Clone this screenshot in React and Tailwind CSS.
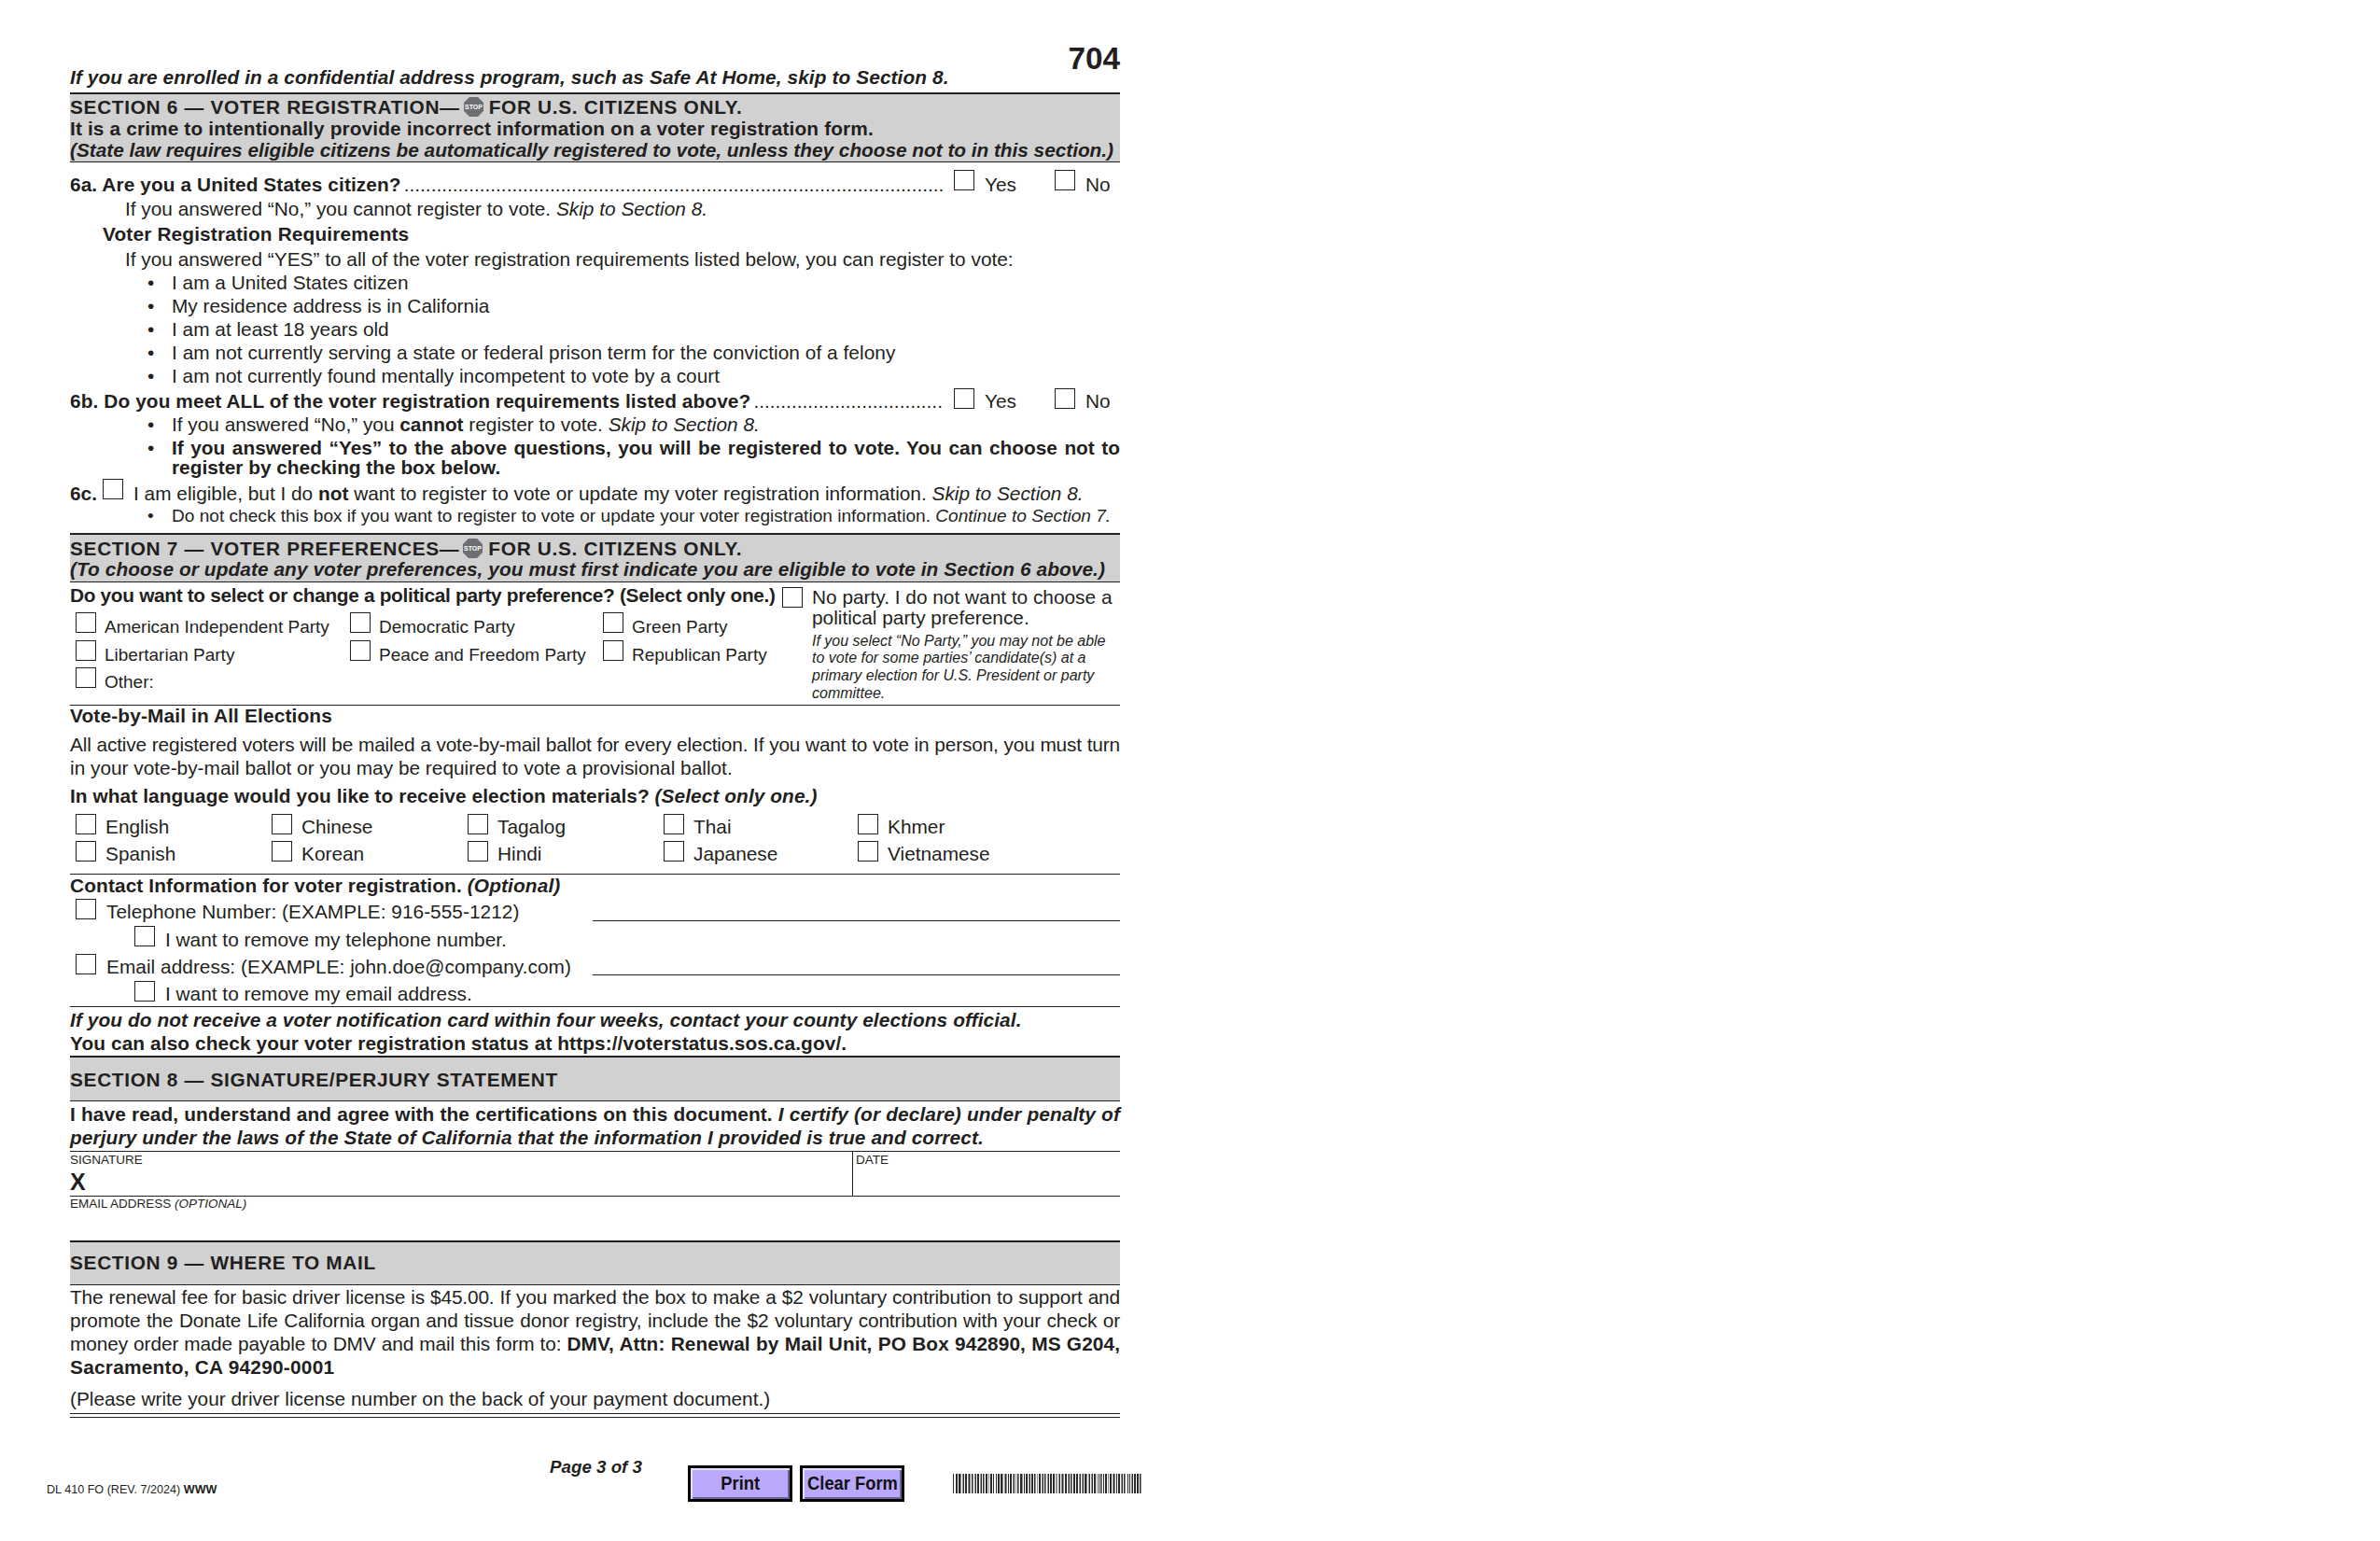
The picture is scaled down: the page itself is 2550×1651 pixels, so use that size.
import React from "react";

const Box = ({ className = "" }) => (
  <span className={"block w-[22px] h-[22px] shrink-0 border-[1.5px] border-[#231f20] " + className} />
);

const Stop = () => (
  <svg width="21" height="21" viewBox="0 0 21 21" className="inline-block -mt-[3px] ml-[4px] mr-[6px]">
    <polygon points="6,0 15,0 21,6 21,15 15,21 6,21 0,15 0,6" fill="#6d6e71" />
    <text x="10.5" y="13.2" textAnchor="middle" fontSize="7" fontWeight="700" letterSpacing="0" fill="#fff" fontFamily="Liberation Sans, sans-serif">STOP</text>
  </svg>
);

const Bullet = ({ className = "", children }) => (
  <div className={"flex pl-[83px] h-[25px] leading-[25px] " + className}>
    <span className="w-[26px] shrink-0">•</span>
    <span className="whitespace-nowrap">{children}</span>
  </div>
);

const YesNo = ({ off }) => (
  <div className="flex w-[182px] shrink-0 ml-auto">
    <Box className={"ml-[4px] " + off} />
    <span className="ml-[11px] w-[75px]">Yes</span>
    <Box className={off} />
    <span className="ml-[11px]">No</span>
  </div>
);

const Party = ({ label }) => (
  <div className="flex gap-[9px]">
    <Box />
    <span className="pt-[3px] whitespace-nowrap text-[19px] leading-[25px] h-[25px]">{label}</span>
  </div>
);

const Lang = ({ label }) => (
  <div className="flex gap-[10px]">
    <Box />
    <span className="pt-[1px] whitespace-nowrap leading-[25px]">{label}</span>
  </div>
);

const BAR =
  "#..##.##+.+#.##.+#+.#+.+#.##.+#.#+.##.+.##.#..#.##.##+.+#+.#.##.+#.+.#+.##+.#.##.+#.##.#+.+.##.+#.#+.+#.##.##.++.+#.+#+.##.+#.#+.##.##.+#.+#.##+.+#.+#.##.+.#.#+.#.##.+.##.+#+.#.##.+#.#+..#.#.+#.##.##.#+";

const Barcode = () => (
  <svg width="204" height="21" viewBox="0 0 204 21" className="block">
    {BAR.split("").map((c, i) =>
      c === "." ? null : <rect key={i} x={i} y="0" width="1" height="21" fill={c === "#" ? "#2a2a2a" : "#8f8f8f"} />
    )}
  </svg>
);

const Button = ({ children }) => (
  <div className="w-[112px] h-[39px] shrink-0 border-[3px] border-black bg-[#b9a8fb] flex items-center justify-center font-bold text-[19.5px] text-[#111] shadow-[inset_2px_2px_0_#e6dfff,inset_-2px_-2px_0_#6f6496]">
    <span className="inline-block scale-x-[0.94]">{children}</span>
  </div>
);

export default function App() {
  return (
    <div className="w-[2550px] h-[1651px] overflow-hidden bg-white pl-[75px] pt-[46px] text-[#231f20] text-[20.83px] font-['Liberation_Sans',Arial,sans-serif]">
      <div className="w-[1125px]">
        <div className="flex justify-between h-[52.5px]">
          <div className="self-end mb-[4px] font-bold italic leading-[25px] tracking-[0.1px]">If you are enrolled in a confidential address program, such as Safe At Home, skip to Section 8.</div>
          <div className="font-bold text-[33.33px] leading-[33px]">704</div>
        </div>

        <div className="bg-[#d1d1d1] border-t-2 border-b-[1.5px] border-[#231f20] pt-[2px] pb-[1.5px] font-bold leading-[23px] whitespace-nowrap">
          <div className="tracking-[0.68px]">SECTION 6 — VOTER REGISTRATION—<Stop />FOR U.S. CITIZENS ONLY.</div>
          <div className="tracking-[0.14px]">It is a crime to intentionally provide incorrect information on a voter registration form.</div>
          <div className="italic tracking-[-0.03px]">(State law requires eligible citizens be automatically registered to vote, unless they choose not to in this section.)</div>
        </div>

        <div className="flex h-[25px] leading-[25px] mt-[10.5px]">
          <span className="font-bold whitespace-nowrap shrink-0 tracking-[0.1px]">6a. Are you a United States citizen?</span>
          <span className="whitespace-nowrap ml-[3px]">{".".repeat(100)}</span>
          <YesNo off="-mt-[2.5px]" />
        </div>
        <div className="pl-[59px] h-[25px] leading-[25px] mt-[1.5px]">If you answered “No,” you cannot register to vote. <i>Skip to Section 8.</i></div>
        <div className="pl-[35px] h-[25px] leading-[25px] mt-[2px] font-bold tracking-[0.15px]">Voter Registration Requirements</div>
        <div className="pl-[59px] h-[25px] leading-[25px] mt-[2px]">If you answered “YES” to all of the voter registration requirements listed below, you can register to vote:</div>
        <Bullet>I am a United States citizen</Bullet>
        <Bullet>My residence address is in California</Bullet>
        <Bullet>I am at least 18 years old</Bullet>
        <Bullet className="tracking-[0.05px]">I am not currently serving a state or federal prison term for the conviction of a felony</Bullet>
        <Bullet>I am not currently found mentally incompetent to vote by a court</Bullet>
        <div className="flex h-[25px] leading-[25px] mt-[2px]">
          <span className="font-bold whitespace-nowrap shrink-0 tracking-[0.1px]">6b. Do you meet ALL of the voter registration requirements listed above?</span>
          <span className="whitespace-nowrap ml-[3px]">{".".repeat(35)}</span>
          <YesNo off="-mt-[1px]" />
        </div>
        <Bullet>If you answered “No,” you <b>cannot</b> register to vote. <i>Skip to Section 8.</i></Bullet>
        <div className="flex pl-[83px] leading-[21px] mt-[2px]">
          <span className="w-[26px] shrink-0">•</span>
          <span className="font-bold text-justify">If you answered “Yes” to the above questions, you will be registered to vote. You can choose not to register by checking the box below.</span>
        </div>
        <div className="flex h-[25px] leading-[25px] mt-[4.5px] whitespace-nowrap">
          <span className="font-bold w-[35px] shrink-0">6c.</span>
          <Box className="-mt-[2.5px]" />
          <span className="ml-[11px]">I am eligible, but I do <b>not</b> want to register to vote or update my voter registration information. <i>Skip to Section 8.</i></span>
        </div>
        <Bullet className="-mt-[0.8px] text-[19.1px]">Do not check this box if you want to register to vote or update your voter registration information. <i>Continue to Section 7.</i></Bullet>

        <div className="mt-[6px] bg-[#d1d1d1] border-t-2 border-b-[1.5px] border-[#231f20] pt-[4px] pb-[2px] font-bold leading-[22px] whitespace-nowrap">
          <div className="tracking-[0.68px]">SECTION 7 — VOTER PREFERENCES—<Stop />FOR U.S. CITIZENS ONLY.</div>
          <div className="italic tracking-[0.08px]">(To choose or update any voter preferences, you must first indicate you are eligible to vote in Section 6 above.)</div>
        </div>

        <div className="flex h-[132px] border-b-[1.5px] border-[#231f20]">
          <div className="w-[763px] shrink-0">
            <div className="mt-[1.5px] font-bold leading-[25px] h-[25px] whitespace-nowrap tracking-[-0.32px]">Do you want to select or change a political party preference? (Select only one.)</div>
            <div className="mt-[6px] ml-[6px] grid grid-cols-[294px_271px_auto] grid-rows-[30px_29px_25px]">
              <Party label="American Independent Party" />
              <Party label="Democratic Party" />
              <Party label="Green Party" />
              <Party label="Libertarian Party" />
              <Party label="Peace and Freedom Party" />
              <Party label="Republican Party" />
              <Party label="Other:" />
            </div>
          </div>
          <Box className="mt-[5px]" />
          <div className="ml-[10px] pt-[5px]">
            <div className="leading-[22px] whitespace-nowrap">No party. I do not want to choose a<br />political party preference.</div>
            <div className="mt-[5px] italic text-[16px] leading-[18.75px] whitespace-nowrap">
              If you select “No Party,” you may not be able<br />to vote for some parties’ candidate(s) at a<br />primary election for U.S. President or party<br />committee.
            </div>
          </div>
        </div>

        <div className="mt-[1.5px] font-bold leading-[19px] tracking-[0.15px]">Vote-by-Mail in All Elections</div>
        <div className="mt-[9px] leading-[25px]">
          <div className="[text-align-last:justify] tracking-[-0.15px]">All active registered voters will be mailed a vote-by-mail ballot for every election. If you want to vote in person, you must turn</div>
          <div>in your vote-by-mail ballot or you may be required to vote a provisional ballot.</div>
        </div>
        <div className="mt-[4.5px] leading-[25px] font-bold tracking-[0.08px]">In what language would you like to receive election materials? <i>(Select only one.)</i></div>
        <div className="mt-[7px] ml-[6px] grid grid-cols-[210px_210px_210px_208px_auto] grid-rows-[29px_25px]">
          <Lang label="English" />
          <Lang label="Chinese" />
          <Lang label="Tagalog" />
          <Lang label="Thai" />
          <Lang label="Khmer" />
          <Lang label="Spanish" />
          <Lang label="Korean" />
          <Lang label="Hindi" />
          <Lang label="Japanese" />
          <Lang label="Vietnamese" />
        </div>
        <div className="mt-[9.8px] border-t-[1.5px] border-[#231f20]" />

        <div className="pt-[0.7px] font-bold leading-[23px] tracking-[0.13px]">Contact Information for voter registration. <i>(Optional)</i></div>
        <div className="mt-[2.5px] flex h-[24.5px] pl-[6px]">
          <Box />
          <span className="ml-[11px] pt-[1px] leading-[25px] whitespace-nowrap tracking-[0.03px]">Telephone Number: (EXAMPLE: 916-555-1212)</span>
          <div className="ml-auto w-[565px] h-[24.5px] border-b-[1.5px] border-[#231f20]" />
        </div>
        <div className="mt-[4.5px] flex h-[27px] pl-[69px]">
          <Box />
          <span className="ml-[11px] pt-[2px] leading-[25px] whitespace-nowrap">I want to remove my telephone number.</span>
        </div>
        <div className="mt-[3px] flex h-[23.5px] pl-[6px]">
          <Box />
          <span className="ml-[11px] pt-[1px] leading-[25px] whitespace-nowrap tracking-[0.03px]">Email address: (EXAMPLE: john.doe@company.com)</span>
          <div className="ml-auto w-[565px] h-[23.5px] border-b-[1.5px] border-[#231f20]" />
        </div>
        <div className="mt-[5.5px] flex h-[25px] pl-[69px]">
          <Box />
          <span className="ml-[11px] pt-[1px] leading-[25px] whitespace-nowrap">I want to remove my email address.</span>
        </div>
        <div className="mt-[2px] border-t-[1.5px] border-[#231f20]" />

        <div className="mt-[1px] leading-[25px] font-bold">
          <div className="italic tracking-[0.09px]">If you do not receive a voter notification card within four weeks, contact your county elections official.</div>
          <div className="tracking-[0.1px]">You can also check your voter registration status at https://voterstatus.sos.ca.gov/.</div>
        </div>

        <div className="mt-[1.7px] h-[48.5px] bg-[#d1d1d1] border-t-2 border-b-[1.5px] border-[#231f20] pt-[10.8px] font-bold leading-[25px] tracking-[0.68px]">SECTION 8 — SIGNATURE/PERJURY STATEMENT</div>

        <div className="mt-[1px] leading-[25px] font-bold text-justify tracking-[0.1px]">I have read, understand and agree with the certifications on this document. <i>I certify (or declare) under penalty of perjury under the laws of the State of California that the information I provided is true and correct.</i></div>

        <div className="mt-[1.7px] flex h-[49.5px] border-t-[1.5px] border-b-[1.5px] border-[#231f20]">
          <div className="w-[839px] border-r border-[#231f20] pt-[2.3px]">
            <div className="text-[13.5px] leading-[14px]">SIGNATURE</div>
            <div className="mt-[4px] text-[25px] leading-[25px] font-bold">X</div>
          </div>
          <div className="pl-[3px] pt-[2.3px] text-[13.5px] leading-[14px]">DATE</div>
        </div>
        <div className="pt-[1px] text-[13.5px] leading-[14px]">EMAIL ADDRESS <i>(OPTIONAL)</i></div>

        <div className="mt-[32px] h-[48px] bg-[#d1d1d1] border-t-2 border-b-[1.5px] border-[#231f20] pt-[8.9px] font-bold leading-[25px] tracking-[0.68px]">SECTION 9 — WHERE TO MAIL</div>

        <div className="leading-[25px]">
          <div className="[text-align-last:justify] tracking-[-0.15px]">The renewal fee for basic driver license is $45.00. If you marked the box to make a $2 voluntary contribution to support and</div>
          <div className="[text-align-last:justify] tracking-[-0.15px]">promote the Donate Life California organ and tissue donor registry, include the $2 voluntary contribution with your check or</div>
          <div className="[text-align-last:justify] tracking-[-0.1px]">money order made payable to DMV and mail this form to: <b className="tracking-[0.08px]">DMV, Attn: Renewal by Mail Unit, PO Box 942890, MS G204,</b></div>
          <div className="font-bold tracking-[0.25px]">Sacramento, CA 94290-0001</div>
        </div>
        <div className="mt-[9px] leading-[25px]">(Please write your driver license number on the back of your payment document.)</div>
        <div className="mt-[2.7px] border-t-[1.5px] border-[#231f20]" />
        <div className="mt-[3.5px] border-t-[1.5px] border-[#231f20]" />

        <div className="-ml-[25px] w-[1200px] mt-[40px] flex items-start whitespace-nowrap">
          <div className="w-[539px] shrink-0 pt-[29.3px] text-[12.6px] leading-[14px]">DL 410 FO (REV. 7/2024) <b>WWW</b></div>
          <div className="w-[148px] shrink-0 font-bold italic text-[18.75px] leading-[25px]">Page 3 of 3</div>
          <div className="mt-[11px] flex gap-[8px] shrink-0">
            <Button>Print</Button>
            <Button>Clear Form</Button>
          </div>
          <div className="ml-[52px] mt-[20px] shrink-0"><Barcode /></div>
        </div>
      </div>
    </div>
  );
}
